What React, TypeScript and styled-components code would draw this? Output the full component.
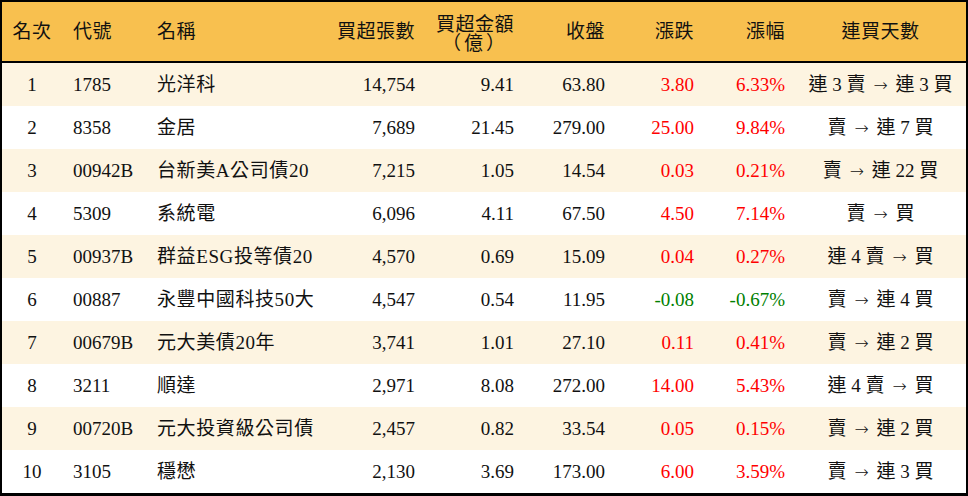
import React from "react";
import styled, { createGlobalStyle, css } from "styled-components";

const Global = createGlobalStyle`
  html, body { margin: 0; padding: 0; background: #ffffff; }
  body { font-family: "Liberation Serif", "Noto Sans CJK TC", serif; }
`;

const COLS = "60px 84px 184px 85px 99px 91px 89px 91px 181px";

const Table = styled.div`
  width: 968px;
  box-sizing: border-box;
  border-top: 2px solid #000;
  border-left: 2px solid #000;
  border-right: 2px solid #000;
  border-bottom: 3px solid #000;
  font-family: "Liberation Serif", "Noto Sans CJK TC", serif;
  font-size: 19px;
  color: #111;
`;

const HeaderRow = styled.div`
  display: grid;
  grid-template-columns: ${COLS};
  height: 59px;
  background: #f8c04f;
  border-bottom: 2px solid #000;
`;

const Row = styled.div<{ $alt: boolean }>`
  display: grid;
  grid-template-columns: ${COLS};
  height: 43px;
  background: ${(p) => (p.$alt ? "#fdf4e1" : "#ffffff")};
`;

type Align = "center" | "left" | "right";

const cellBase = css<{ $align: Align; $pl?: number }>`
  display: flex;
  flex-direction: column;
  justify-content: center;
  align-items: ${(p) =>
    p.$align === "center" ? "center" : p.$align === "left" ? "flex-start" : "flex-end"};
  text-align: ${(p) => p.$align};
  padding-left: ${(p) => p.$pl ?? 0}px;
  white-space: nowrap;
`;

const HeadCell = styled.div<{ $align: Align; $pl?: number; $pt?: number }>`
  ${cellBase};
  padding-top: ${(p) => p.$pt ?? 0}px;
  line-height: 19px;
  letter-spacing: 0.5px;
`;

const HeadLine = styled.span<{ $wide?: boolean }>`
  display: block;
  line-height: 19px;
  letter-spacing: ${(p) => (p.$wide ? "3px" : "0.5px")};
  padding-right: ${(p) => (p.$wide ? "6px" : "0")};
`;

const Cell = styled.div<{ $align: Align; $pl?: number; $tone?: "up" | "down" }>`
  ${cellBase};
  line-height: 22px;
  color: ${(p) => (p.$tone === "up" ? "#ff0000" : p.$tone === "down" ? "#008000" : "#111")};
`;

const CjkText = styled.span`
  letter-spacing: 0.6px;
`;

const Arrow = styled.span`
  font-family: "DejaVu Sans", sans-serif;
  font-size: 17px;
  font-weight: 200;
  margin: 0 3px;
`;

type Item = {
  code: string;
  name: string;
  vol: string;
  amt: string;
  close: string;
  chg: string;
  pct: string;
  from: string;
  to: string;
};

const data: Item[] = [
  { code: "1785", name: "光洋科", vol: "14,754", amt: "9.41", close: "63.80", chg: "3.80", pct: "6.33%", from: "連 3 賣", to: "連 3 買" },
  { code: "8358", name: "金居", vol: "7,689", amt: "21.45", close: "279.00", chg: "25.00", pct: "9.84%", from: "賣", to: "連 7 買" },
  { code: "00942B", name: "台新美A公司債20", vol: "7,215", amt: "1.05", close: "14.54", chg: "0.03", pct: "0.21%", from: "賣", to: "連 22 買" },
  { code: "5309", name: "系統電", vol: "6,096", amt: "4.11", close: "67.50", chg: "4.50", pct: "7.14%", from: "賣", to: "買" },
  { code: "00937B", name: "群益ESG投等債20", vol: "4,570", amt: "0.69", close: "15.09", chg: "0.04", pct: "0.27%", from: "連 4 賣", to: "買" },
  { code: "00887", name: "永豐中國科技50大", vol: "4,547", amt: "0.54", close: "11.95", chg: "-0.08", pct: "-0.67%", from: "賣", to: "連 4 買" },
  { code: "00679B", name: "元大美債20年", vol: "3,741", amt: "1.01", close: "27.10", chg: "0.11", pct: "0.41%", from: "賣", to: "連 2 買" },
  { code: "3211", name: "順達", vol: "2,971", amt: "8.08", close: "272.00", chg: "14.00", pct: "5.43%", from: "連 4 賣", to: "買" },
  { code: "00720B", name: "元大投資級公司債", vol: "2,457", amt: "0.82", close: "33.54", chg: "0.05", pct: "0.15%", from: "賣", to: "連 2 買" },
  { code: "3105", name: "穩懋", vol: "2,130", amt: "3.69", close: "173.00", chg: "6.00", pct: "3.59%", from: "賣", to: "連 3 買" },
];

export default function App() {
  return (
    <>
      <Global />
      <Table>
        <HeaderRow>
          <HeadCell $align="center">名次</HeadCell>
          <HeadCell $align="left" $pl={11}>代號</HeadCell>
          <HeadCell $align="left" $pl={11}>名稱</HeadCell>
          <HeadCell $align="right">買超張數</HeadCell>
          <HeadCell $align="right" $pt={4}>
            <HeadLine>買超金額</HeadLine>
            <HeadLine $wide>（億）</HeadLine>
          </HeadCell>
          <HeadCell $align="right">收盤</HeadCell>
          <HeadCell $align="right">漲跌</HeadCell>
          <HeadCell $align="right">漲幅</HeadCell>
          <HeadCell $align="center" $pl={10}>連買天數</HeadCell>
        </HeaderRow>
        {data.map((d, i) => {
          const tone = d.chg.startsWith("-") ? "down" : "up";
          return (
            <Row key={d.code} $alt={i % 2 === 0}>
              <Cell $align="center">{i + 1}</Cell>
              <Cell $align="left" $pl={11}>{d.code}</Cell>
              <Cell $align="left" $pl={11}>
                <CjkText>{d.name}</CjkText>
              </Cell>
              <Cell $align="right">{d.vol}</Cell>
              <Cell $align="right">{d.amt}</Cell>
              <Cell $align="right">{d.close}</Cell>
              <Cell $align="right" $tone={tone}>{d.chg}</Cell>
              <Cell $align="right" $tone={tone}>{d.pct}</Cell>
              <Cell $align="center" $pl={10}>
                <span>
                  {d.from} <Arrow>→</Arrow> {d.to}
                </span>
              </Cell>
            </Row>
          );
        })}
      </Table>
    </>
  );
}
